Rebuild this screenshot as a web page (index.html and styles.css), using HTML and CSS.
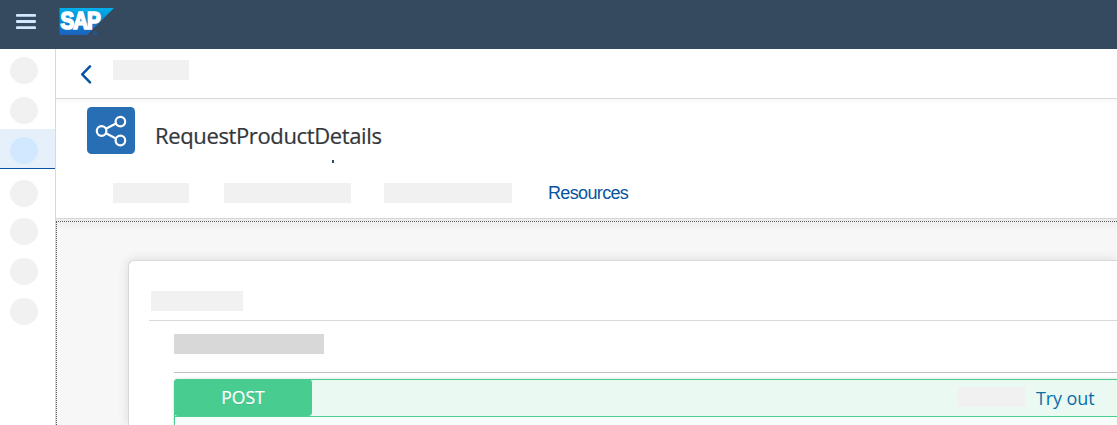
FILE: index.html
```html
<!DOCTYPE html>
<html lang="en">
<head>
<meta charset="utf-8">
<title>RequestProductDetails</title>
<link rel="stylesheet" href="styles.css">
</head>
<body>
<header class="shell">
  <svg class="menu" width="20" height="15" viewBox="0 0 20 15"><path d="M1.2 1.4H18.8M1.2 7.5H18.8M1.2 13.6H18.8" stroke="#d1e8ff" stroke-width="2.8" stroke-linecap="round"/></svg>
  <svg class="logo" width="56" height="28" viewBox="0 0 56 28">
    <defs><linearGradient id="sap" x1="0" y1="0" x2="0" y2="1"><stop offset="0" stop-color="#00b1eb"/><stop offset=".45" stop-color="#078bd5"/><stop offset="1" stop-color="#1d61bc"/></linearGradient></defs>
    <path d="M.5 0H55L28 27H.5Z" fill="url(#sap)"/>
    <text class="logo-text" x="1.4" y="21" textLength="39.5" lengthAdjust="spacingAndGlyphs">SAP</text>
    <circle cx="36" cy="25.2" r="1.4" fill="none" stroke="#265c9f"/>
  </svg>
</header>
<div class="body">
  <nav class="side">
    <div class="side-item"><span class="dot"></span></div>
    <div class="side-item"><span class="dot"></span></div>
    <div class="side-item active"><span class="dot"></span></div>
    <div class="side-item spaced"><span class="dot"></span></div>
    <div class="side-item"><span class="dot"></span></div>
    <div class="side-item"><span class="dot"></span></div>
    <div class="side-item"><span class="dot"></span></div>
  </nav>
  <main class="main">
    <div class="crumbs">
      <svg class="back" width="12" height="20" viewBox="0 0 12 20"><path d="M10 2.3 2.2 10.3 10 18.3" fill="none" stroke="#0854a0" stroke-width="2.5" stroke-linecap="round" stroke-linejoin="round"/></svg>
      <span class="ph w76"></span>
    </div>
    <section class="object">
      <div class="title-row">
        <svg class="share" width="48" height="47" viewBox="0 0 48 47"><rect width="48" height="47" rx="4.5" fill="#286eb4"/><g fill="none" stroke="#fff" stroke-width="2.2"><circle cx="14.6" cy="24" r="4.8"/><circle cx="33.4" cy="14.6" r="4.8"/><circle cx="33.4" cy="33.5" r="4.8"/><path d="M18.9 21.7 29 16.6M18.9 26.3 29 31.4"/></g></svg>
        <h1 class="title">RequestProductDetails</h1>
      </div>
      <div class="tick"></div>
      <div class="tabs">
        <span class="ph w76"></span><span class="ph w127"></span><span class="ph w128"></span><span class="tab">Resources</span>
      </div>
    </section>
    <div class="gap"></div>
    <section class="content">
      <div class="card">
        <div class="card-head"><span class="ph w92"></span></div>
        <div class="group">
          <div class="group-head"><span class="ph dark"></span></div>
          <div class="op">
            <div class="op-head"><span class="method">POST</span><span class="ph w67"></span><span class="try">Try out</span></div>
          </div>
        </div>
      </div>
    </section>
  </main>
</div>
</body>
</html>
```
FILE: styles.css
```css
* { box-sizing: border-box; }
body { margin: 0; width: 1117px; height: 425px; overflow: hidden; background: #fff; font-family: "Open Sans", "Noto Sans", sans-serif; }
svg { display: block; flex: none; }
.shell { display: flex; height: 49px; background: #354a5f; }
.menu { margin: 14px 0 0 16px; }
.logo { margin: 8px 0 0 23px; }
.logo-text { font: 700 23px "Liberation Sans", sans-serif; fill: #fff; stroke: #fff; stroke-width: 1.7; letter-spacing: -1px; }
.body { display: flex; height: 376px; }
.side { width: 56px; flex: none; border-right: 1px solid #d9d9d9; }
.side-item { height: 40px; padding: 8px 0 0 10px; }
.side-item.active { background: #e5f0fa; border-bottom: 1px solid #0854a0; }
.side-item.spaced { height: 38px; margin-top: 3px; }
.dot { display: block; width: 28px; height: 27px; border-radius: 50%; background: #f1f1f1; }
.active .dot { background: #d1e8ff; }
.main { flex: 1; min-width: 0; display: flex; flex-direction: column; }
.ph { display: block; flex: none; height: 20px; background: #f1f1f1; }
.w76 { width: 76px; }
.w127 { width: 127px; }
.w128 { width: 128px; }
.w92 { width: 92px; }
.w67 { width: 67px; }
.dark { width: 150px; background: #d8d8d8; }
.crumbs { display: flex; gap: 21px; height: 50px; flex: none; padding: 11px 0 0 24px; border-bottom: 1px solid #d9d9d9; }
.back { margin-top: 4px; }
.object { height: 120px; flex: none; padding-top: 8px; border-bottom: 1px solid #d9d9d9; background: linear-gradient(#f8f8f8, #fff 5px); }
.title-row { display: flex; gap: 20px; height: 53px; padding-left: 31px; }
.title { margin: 13px 0 0; font-size: 22px; font-weight: 400; line-height: 30px; letter-spacing: -0.37px; color: #32363a; -webkit-text-stroke: 0.2px #32363a; }
.tick { width: 2px; height: 3px; margin-left: 276px; background: #354a5f; }
.tabs { display: flex; padding: 20px 0 0 57px; }
.tabs .w127 { margin-left: 35px; }
.tabs .w128 { margin-left: 33px; }
.tab { margin-left: 36px; font: 18px/20px "Liberation Sans", sans-serif; letter-spacing: -0.65px; color: #0854a0; }
.gap { height: 2px; flex: none; background: #ececec; }
.content { flex: 1; min-height: 0; padding: 38px 0 0 71px; border: 1px dotted #555; border-width: 1px 0 0 1px; background: linear-gradient(#eeeeee, #f7f7f7 8px); }
.card { height: 165px; border: 1px solid #d9d9d9; border-width: 1px 0 0 1px; border-radius: 6px 0 0 0; background: #fff; box-shadow: 0 0 12px rgba(0,0,0,.12); }
.card-head { height: 60px; margin-left: 20px; padding: 30px 0 0 2px; border-bottom: 1px solid #d9d9d9; }
.group { margin-left: 45px; }
.group-head { height: 52px; padding-top: 13px; border-bottom: 1px solid #bfbfbf; }
.op { height: 46px; margin-top: 6px; border: 1px solid #49cc90; border-width: 1px 0 0 1px; border-radius: 4px 0 0 0; background: #f6fcf9; box-shadow: 0 0 3px rgba(0,0,0,.19); }
.op-head { display: flex; height: 37px; border-bottom: 1px solid #49cc90; background: #eaf9f2; }
.method { width: 138px; height: 37px; margin: -1px 0 0 -1px; border-radius: 4px; background: #49cc90; color: #fff; font-size: 17.5px; line-height: 37px; text-align: center; text-shadow: 0 1px rgba(0,0,0,.1); -webkit-text-stroke: 0.2px #fff; }
.op-head .w67 { margin: 7px 0 0 646px; }
.try { margin: 6px 0 0 11px; font-size: 18px; line-height: 24px; letter-spacing: -0.1px; color: #0a6ea8; white-space: nowrap; }
```
